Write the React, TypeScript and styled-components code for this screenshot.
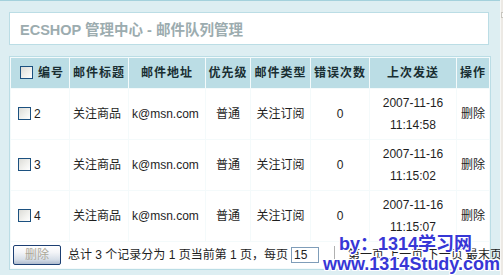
import React from 'react';
import styled, { createGlobalStyle } from 'styled-components';

const GlobalStyle = createGlobalStyle`
  * { box-sizing: border-box; }
  html, body { margin: 0; padding: 0; }
  body {
    background: #DDEEF2;
    font-family: "Liberation Sans", "Noto Sans CJK SC", sans-serif;
    font-size: 12px;
    color: #222;
    overflow: hidden;
  }
`;

const Frame = styled.div`
  position: relative;
  width: 503px;
  height: 275px;
  display: flex;
  overflow: hidden;
`;

const Main = styled.div`
  width: 500px;
  height: 100%;
  border-top: 1px solid #A4D1DC;
  padding: 11px 0 0 9px;
`;

const Strip = styled.div`
  position: relative;
  width: 3px;
  height: 100%;
  background: #ECE9E4;
  border-left: 1px solid #F7F7F5;
`;

const StripKnob = styled.div`
  position: absolute;
  top: 12px;
  left: 0;
  width: 2px;
  height: 6px;
  border: 1px solid #C9C6BF;
  border-right: none;
  background: #FAFAF8;
`;

const Title = styled.h1`
  margin: 0;
  width: 480px;
  height: 33px;
  border: 1px solid #BBDDE5;
  background: #fff;
  padding: 0 0 0 10px;
  display: flex;
  align-items: center;
  font-family: "Liberation Sans", "Noto Sans CJK SC", sans-serif;
  font-size: 14.5px;
  font-weight: bold;
  color: #9CACAF;
  white-space: nowrap;
`;

const ListDiv = styled.div`
  margin-top: 11px;
  width: 482px;
  border: 1px solid #BBDDE5;
  background: #F4FAFB;
`;

const Table = styled.table`
  width: 480px;
  border-collapse: separate;
  border-spacing: 1px;
  table-layout: fixed;
`;

const Th = styled.th<{ $w: number }>`
  width: ${p => p.$w}px;
  background: #BBDDE5;
  padding: 3px 0;
  line-height: 24px;
  font-size: 12px;
  font-weight: bold;
  letter-spacing: 1px;
  color: #192E32;
  text-align: center;
  white-space: nowrap;
`;

const Td = styled.td<{ $align?: 'left' | 'center' }>`
  background: #fff;
  padding: 3px;
  line-height: 22px;
  text-align: ${p => p.$align || 'center'};
  vertical-align: middle;
  white-space: nowrap;
  color: #1E1E1E;
`;

const FootTd = styled.td`
  background: #fff;
  padding: 3px 2px;
  line-height: 20px;
  white-space: nowrap;
`;

const FootBar = styled.div`
  display: flex;
  align-items: center;
  height: 20px;
  white-space: nowrap;
`;

const Check = styled.span`
  display: inline-block;
  width: 13px;
  height: 13px;
  margin: 0 3px 0 4px;
  vertical-align: -2px;
  border: 1px solid #1C5180;
  background: linear-gradient(135deg, #DCDCD7 0%, #F2F2EF 60%, #FFFFFF 100%);
`;

const HeadCheck = styled(Check)`
  margin-right: 5px;
`;

const DelButton = styled.button`
  width: 48px;
  height: 20px;
  padding: 0;
  border: 1px solid #1C3F73;
  border-radius: 2px;
  background: linear-gradient(#FFFFFF 0%, #F4F5F8 35%, #D6DEE8 75%, #AEBBCE 100%);
  color: #ACA899;
  font-family: "Liberation Sans", "Noto Sans CJK SC", sans-serif;
  font-size: 12px;
  line-height: 18px;
  flex-shrink: 0;
`;

const Summary = styled.span`
  margin-left: 7px;
  color: #1E1E1E;
`;

const PageInput = styled.input`
  width: 28px;
  height: 16px;
  margin-left: 3px;
  padding: 0 0 0 2px;
  border: 1px solid #7F9DB9;
  font-family: "Liberation Sans", sans-serif;
  font-size: 12px;
  color: #222;
  background: #fff;
  flex-shrink: 0;
`;

const Sep = styled.span`
  width: 1px;
  height: 18px;
  margin: 0 13px 0 15px;
  background: #B0B0B0;
  flex-shrink: 0;
`;

const PageLinks = styled.span`
  color: #1E1E1E;
`;

const Watermark = styled.div`
  position: absolute;
  left: 323px;
  top: 234px;
  font-family: "Liberation Sans", "Noto Sans CJK SC", sans-serif;
  font-weight: bold;
  font-size: 18px;
  line-height: 20px;
  color: #3737D6;
  white-space: nowrap;
  pointer-events: none;
  text-shadow:
    1px 0 0 #fff, -1px 0 0 #fff, 0 1px 0 #fff, 0 -1px 0 #fff,
    1px 1px 0 #fff, -1px -1px 0 #fff, 1px -1px 0 #fff, -1px 1px 0 #fff;
`;

const WmLine = styled.div<{ $indent?: number }>`
  padding-left: ${p => p.$indent || 0}px;
`;

const rows = [
  { id: 2, time: '11:14:58' },
  { id: 3, time: '11:15:02' },
  { id: 4, time: '11:15:07' },
];

export default function App() {
  return (
    <>
      <GlobalStyle />
      <Frame>
        <Main>
          <Title>ECSHOP 管理中心 - 邮件队列管理</Title>
          <ListDiv>
            <Table>
              <thead>
                <tr>
                  <Th $w={58}><HeadCheck />编号</Th>
                  <Th $w={58}>邮件标题</Th>
                  <Th $w={76}>邮件地址</Th>
                  <Th $w={44}>优先级</Th>
                  <Th $w={59}>邮件类型</Th>
                  <Th $w={58}>错误次数</Th>
                  <Th $w={86}>上次发送</Th>
                  <Th $w={32}>操作</Th>
                </tr>
              </thead>
              <tbody>
                {rows.map(r => (
                  <tr key={r.id}>
                    <Td $align="left"><Check />{r.id}</Td>
                    <Td $align="left">关注商品</Td>
                    <Td $align="left">k@msn.com</Td>
                    <Td>普通</Td>
                    <Td>关注订阅</Td>
                    <Td>0</Td>
                    <Td>2007-11-16<br />{r.time}</Td>
                    <Td>删除</Td>
                  </tr>
                ))}
                <tr>
                  <FootTd colSpan={8}>
                    <FootBar>
                      <DelButton disabled>删除</DelButton>
                      <Summary>总计 3 个记录分为 1 页当前第 1 页，每页</Summary>
                      <PageInput defaultValue="15" />
                      <Sep />
                      <PageLinks>第一页 上一页 下一页 最末页</PageLinks>
                    </FootBar>
                  </FootTd>
                </tr>
              </tbody>
            </Table>
          </ListDiv>
        </Main>
        <Strip><StripKnob /></Strip>
        <Watermark>
          <WmLine $indent={16}>by：1314学习网</WmLine>
          <WmLine>www.1314Study.com</WmLine>
        </Watermark>
      </Frame>
    </>
  );
}
